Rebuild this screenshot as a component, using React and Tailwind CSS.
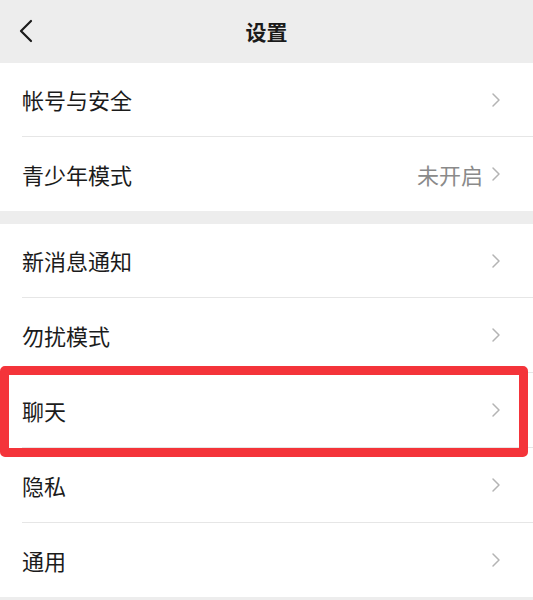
import React from 'react';

const Chevron = () => (
    <svg width="10" height="16" viewBox="0 0 10 16" className="shrink-0">
        <polyline points="2,2 8,8 2,14" fill="none" stroke="#b4b4b4" strokeWidth="1.5" strokeLinecap="round" strokeLinejoin="round" />
    </svg>
);

const Row = ({ label, value, last, tall }) => (
    <div className={'flex bg-white pl-[22px] ' + (tall ? 'h-[75px]' : 'h-[74px]')}>
        <div className={'flex flex-1 items-center pr-[32px] ' + (last ? '' : 'border-b border-[#e6e6e6]')}>
            <span className="flex-1 text-[22px] text-[#1b1b1b]">{label}</span>
            {value && <span className="mr-[8px] text-[22px] text-[#8a8a8a]">{value}</span>}
            <Chevron />
        </div>
    </div>
);

export default function App() {
    return (
        <main className="relative h-[600px] w-[533px] overflow-hidden bg-[#ededed]" style={{ fontFamily: '"Noto Sans CJK SC", "Noto Sans", sans-serif' }}>
            <header className="relative flex h-[63px] items-center justify-center bg-[#ededed]">
                <svg width="16" height="24" viewBox="0 0 16 24" className="absolute left-[18px] top-[19px]">
                    <polyline points="13,2 3,12 13,22" fill="none" stroke="#1b1b1b" strokeWidth="2.2" strokeLinecap="round" strokeLinejoin="round" />
                </svg>
                <h1 className="text-[21px] font-bold text-[#1b1b1b]">设置</h1>
            </header>

            <section>
                <Row label="帐号与安全" />
                <Row label="青少年模式" value="未开启" last />
            </section>

            <section className="mt-[13px]">
                <Row label="新消息通知" />
                <Row label="勿扰模式" tall />
                <Row label="聊天" tall />
                <Row label="隐私" tall />
                <Row label="通用" last />
            </section>

            {/* red annotation box */}
            <div className="absolute left-0 top-[366px] h-[91px] w-[528px] rounded-[5px] border-[9px] border-[#f4343a]" />
        </main>
    );
}
